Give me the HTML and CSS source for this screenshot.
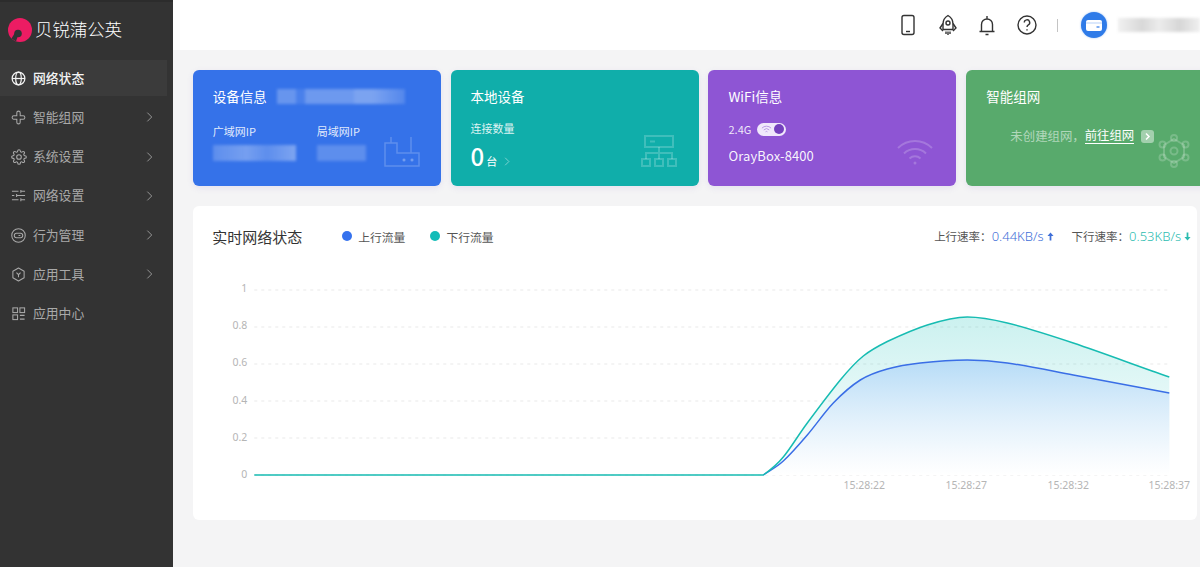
FILE: index.html
```html
<!DOCTYPE html>
<html lang="zh">
<head>
<meta charset="utf-8">
<title>贝锐蒲公英</title>
<link rel="stylesheet" href="styles.css">
</head>
<body>
<div class="app">
  <aside class="sidebar">
    <div class="brand">
      <svg class="brand-mark" viewBox="0 0 24 24"><circle cx="12" cy="12" r="12" fill="#ec1c63"/><circle cx="10" cy="15.500" r="3.800" fill="#2f3335"/><path d="M6.500 15.500L3.500 20.500 8 23.500 9.500 19Z" fill="#2f3335"/></svg>
      <span class="brand-name">贝锐蒲公英</span>
    </div>
    <nav class="nav">
      <a class="nav-item active">
        <svg class="nav-icon" viewBox="0 0 16 16"><circle cx="8" cy="8" r="6.800"/><ellipse cx="8" cy="8" rx="3" ry="6.800"/><path d="M1.200 8h13.600"/></svg>
        <span class="nav-label">网络状态</span>
      </a>
      <a class="nav-item">
        <svg class="nav-icon" viewBox="0 0 16 16"><path d="M6.200 6.200V3a1.800 1.800 0 0 1 3.600 0v3.200H13a1.800 1.800 0 0 1 0 3.600H9.800V13a1.800 1.800 0 0 1-3.600 0V9.800H3a1.800 1.800 0 0 1 0-3.600z"/></svg>
        <span class="nav-label">智能组网</span>
        <svg class="nav-arrow" viewBox="0 0 8 12"><path d="M1.500 1l5 5-5 5"/></svg>
      </a>
      <a class="nav-item">
        <svg class="nav-icon nav-icon-gear" viewBox="0 0 24 24"><circle cx="12" cy="12" r="3.500"/><path d="M19.400 15a1.650 1.650 0 0 0 .33 1.820l.06.06a2 2 0 0 1 0 2.830 2 2 0 0 1-2.830 0l-.06-.06a1.650 1.650 0 0 0-1.820-.33 1.650 1.650 0 0 0-1 1.510V21a2 2 0 0 1-2 2 2 2 0 0 1-2-2v-.09A1.650 1.650 0 0 0 9 19.400a1.650 1.650 0 0 0-1.820.33l-.06.06a2 2 0 0 1-2.830 0 2 2 0 0 1 0-2.830l.06-.06a1.650 1.650 0 0 0 .33-1.820 1.650 1.650 0 0 0-1.510-1H3a2 2 0 0 1-2-2 2 2 0 0 1 2-2h.09A1.650 1.650 0 0 0 4.600 9a1.650 1.650 0 0 0-.33-1.820l-.06-.06a2 2 0 0 1 0-2.830 2 2 0 0 1 2.830 0l.06.06a1.650 1.650 0 0 0 1.820.33H9a1.650 1.650 0 0 0 1-1.510V3a2 2 0 0 1 2-2 2 2 0 0 1 2 2v.09a1.650 1.650 0 0 0 1 1.510 1.650 1.650 0 0 0 1.820-.33l.06-.06a2 2 0 0 1 2.830 0 2 2 0 0 1 0 2.830l-.06.06a1.650 1.650 0 0 0-.33 1.820V9a1.650 1.650 0 0 0 1.510 1H21a2 2 0 0 1 2 2 2 2 0 0 1-2 2h-.09a1.650 1.650 0 0 0-1.510 1z"/></svg>
        <span class="nav-label">系统设置</span>
        <svg class="nav-arrow" viewBox="0 0 8 12"><path d="M1.500 1l5 5-5 5"/></svg>
      </a>
      <a class="nav-item">
        <svg class="nav-icon" viewBox="0 0 16 16"><path d="M1 3.500h7M10.500 3.500H15M10.500 2v3M1 8h2.500M6 8h9M6 6.500v3M1 12.500h7M10.500 12.500H15M10.500 11v3"/></svg>
        <span class="nav-label">网络设置</span>
        <svg class="nav-arrow" viewBox="0 0 8 12"><path d="M1.500 1l5 5-5 5"/></svg>
      </a>
      <a class="nav-item">
        <svg class="nav-icon" viewBox="0 0 16 16"><circle cx="8" cy="8" r="7.200"/><rect x="3.500" y="5.700" width="9" height="4.600" rx="2.300"/><path d="M8 8h2"/></svg>
        <span class="nav-label">行为管理</span>
        <svg class="nav-arrow" viewBox="0 0 8 12"><path d="M1.500 1l5 5-5 5"/></svg>
      </a>
      <a class="nav-item">
        <svg class="nav-icon" viewBox="0 0 16 16"><path d="M8 1l6 3.500v7L8 15l-6-3.500v-7z" stroke-linejoin="round"/><path d="M5.800 6L8 8.200 10.200 6M8 8.200V11"/></svg>
        <span class="nav-label">应用工具</span>
        <svg class="nav-arrow" viewBox="0 0 8 12"><path d="M1.500 1l5 5-5 5"/></svg>
      </a>
      <a class="nav-item">
        <svg class="nav-icon" viewBox="0 0 16 16"><rect x="2" y="2" width="5" height="5"/><rect x="2" y="9.500" width="5" height="5"/><rect x="9.500" y="2" width="5" height="5"/><path d="M9.500 10h5M9.500 14h5"/></svg>
        <span class="nav-label">应用中心</span>
      </a>
    </nav>
  </aside>

  <div class="main">
    <header class="topbar">
      <svg class="top-icon" viewBox="0 0 24 24"><rect x="6" y="2.500" width="12" height="19" rx="2"/><path d="M10 18.500h4"/></svg>
      <svg class="top-icon" viewBox="0 0 24 24"><path d="M12 2.500c3.500 2 5 5 5 8.500v5.500H7V11c0-3.500 1.500-6.500 5-8.500z"/><circle cx="12" cy="10" r="2"/><path d="M7 10.500L4 15l3 3M17 10.500l3 4.500-3 3M10 18.500V21M12 18.500V22M14 18.500V21"/></svg>
      <svg class="top-icon" viewBox="0 0 24 24"><path d="M4.500 18.500h15M6.500 18.500v-7a5.500 5.500 0 0 1 11 0v7M12 6V3M10.500 21.500h3"/></svg>
      <svg class="top-icon" viewBox="0 0 24 24"><circle cx="12" cy="12" r="9"/><path d="M9.300 9.500a2.700 2.700 0 1 1 4 2.400c-.9.500-1.300 1-1.300 2.100"/><path d="M12 16.200v1.300"/></svg>
      <span class="top-divider"></span>
      <span class="avatar">
        <svg viewBox="0 0 26 26"><rect x="5" y="8" width="16" height="11" rx="2" fill="#fff"/><path d="M5 11h16" stroke="#cfe0fb" stroke-width="1.500"/><path d="M15.500 15h3" stroke="#2f7be8" stroke-width="1.200"/></svg>
      </span>
      <span class="user-blur"></span>
    </header>

    <section class="content">
      <div class="cards">
        <article class="card card-blue">
          <h3 class="card-title">设备信息<span class="blur blur-sn"></span></h3>
          <div class="ip-row">
            <div class="ip-col"><span class="meta">广域网IP</span><span class="blur blur-wan"></span></div>
            <div class="ip-col"><span class="meta">局域网IP</span><span class="blur blur-lan"></span></div>
          </div>
          <svg class="card-art art-router" viewBox="0 0 36 30"><path d="M1 6h12v10h22v13H1zM7 0v6M27 0v16"/><circle cx="20" cy="23" r="1" fill="currentColor"/><circle cx="28" cy="23" r="1" fill="currentColor"/></svg>
        </article>

        <article class="card card-teal">
          <h3 class="card-title">本地设备</h3>
          <span class="meta meta-count">连接数量</span>
          <div class="count"><strong class="count-num">0</strong><span class="count-unit">台</span>
            <svg class="count-arrow" viewBox="0 0 8 12"><path d="M1.500 1l5 5-5 5"/></svg></div>
          <svg class="card-art art-net" viewBox="0 0 36 32"><rect x="4" y="1" width="28" height="11"/><path d="M9 6.500h5M18 12v12M5 24v-6h26v6"/><rect x="1" y="24" width="8" height="7"/><rect x="14" y="24" width="8" height="7"/><rect x="27" y="24" width="8" height="7"/></svg>
        </article>

        <article class="card card-purple">
          <h3 class="card-title">WiFi信息</h3>
          <div class="band"><span class="meta">2.4G</span>
            <span class="toggle"><svg class="toggle-wifi" viewBox="0 0 12 9"><path d="M1 3a7 7 0 0 1 10 0M3 5a4.200 4.200 0 0 1 6 0M5 7a1.500 1.500 0 0 1 2 0"/></svg><i class="toggle-knob"></i></span>
          </div>
          <div class="ssid">OrayBox-8400</div>
          <svg class="card-art art-wifi" viewBox="0 0 36 26"><path d="M1 9a24 24 0 0 1 34 0M7 14.500a16 16 0 0 1 22 0M12.500 19.500a8 8 0 0 1 11 0"/><circle cx="18" cy="24" r="1.500" fill="currentColor" stroke="none"/></svg>
        </article>

        <article class="card card-green">
          <h3 class="card-title">智能组网</h3>
          <div class="mesh-note"><span class="mesh-muted">未创建组网，</span><a class="mesh-link">前往组网</a><span class="mesh-go"><svg viewBox="0 0 8 12"><path d="M2 2l4 4-4 4"/></svg></span></div>
          <svg class="card-art art-mesh" viewBox="0 0 32 34"><path d="M16 5l10 6v12l-10 6-10-6V11z"/><circle cx="16" cy="17" r="3.500"/><circle cx="16" cy="4" r="3"/><circle cx="16" cy="30" r="3"/><circle cx="4.500" cy="10.500" r="3"/><circle cx="27.500" cy="10.500" r="3"/><circle cx="4.500" cy="23.500" r="3"/><circle cx="27.500" cy="23.500" r="3"/></svg>
        </article>
      </div>

      <article class="panel">
        <div class="panel-head">
          <h2 class="panel-title">实时网络状态</h2>
          <span class="legend"><i class="dot dot-up"></i>上行流量</span>
          <span class="legend"><i class="dot dot-down"></i>下行流量</span>
          <div class="rates">
            <span class="rate">上行速率：<b class="rate-val rate-up">0.44KB/s<svg class="rate-arrow" viewBox="0 0 8 10"><path d="M4 0.500L7.500 4.500H5V9.500H3V4.500H0.500Z"/></svg></b></span>
            <span class="rate">下行速率：<b class="rate-val rate-down">0.53KB/s<svg class="rate-arrow" viewBox="0 0 8 10"><path d="M4 9.500L7.500 5.500H5V0.500H3V5.500H0.500Z"/></svg></b></span>
          </div>
        </div>
        <svg class="chart" viewBox="192.700 268 1004.300 252">
          <defs>
            <linearGradient id="fillDown" x1="0" y1="0" x2="0" y2="1"><stop offset="0" stop-color="#14c0b8" stop-opacity=".22"/><stop offset=".55" stop-color="#14c0b8" stop-opacity=".1"/><stop offset="1" stop-color="#14c0b8" stop-opacity="0"/></linearGradient>
            <linearGradient id="fillUp" x1="0" y1="0" x2="0" y2="1"><stop offset="0" stop-color="#5cb0ec" stop-opacity=".45"/><stop offset="1" stop-color="#8fc6f0" stop-opacity="0"/></linearGradient>
          </defs>
          <g class="grid">
            <path d="M254 290H1169"/><path d="M254 327H1169"/><path d="M254 364H1169"/><path d="M254 401H1169"/><path d="M254 438H1169"/><path d="M254 475H1169"/>
          </g>
          <g class="y-labels">
            <text x="247" y="292">1</text><text x="247" y="329">0.8</text><text x="247" y="366">0.6</text><text x="247" y="404">0.4</text><text x="247" y="441">0.2</text><text x="247" y="478">0</text>
          </g>
          <g class="x-labels">
            <text x="864" y="489">15:28:22</text><text x="966" y="489">15:28:27</text><text x="1068" y="489">15:28:32</text><text x="1169" y="489">15:28:37</text>
          </g>
          <path fill="url(#fillDown)" d="M763 475C770 470 776 465.700 783 457C790.300 448.300 797.500 435.800 807 423C816.500 410.200 830.700 391.300 840 380C849.300 368.700 855.500 362 863 356C870.500 350 877 346.500 887 341.500C897.700 336.500 913.700 329.200 927 325C940.300 320.800 953.700 317 967 317C980.300 317 994 319.800 1007 323C1029 328.400 1051 335.700 1073 343C1105 353.700 1137 366 1169 377V475Z"/>
          <path fill="#fff" d="M763 475C770 470 775.700 467.700 783 461C790.300 454.300 798.700 444.700 807 435C815.300 425.300 824.200 412.200 833 403C841.800 393.800 851 385.700 860 380C869 374.300 877 371.800 887 369C897 366.200 906.700 364.500 920 363C933.300 361.500 952 360 967 360C982 360 994 361.100 1007 363C1029 366.100 1051 370.900 1073 375C1105 380.900 1137 387 1169 393V475Z"/>
          <path fill="url(#fillUp)" d="M763 475C770 470 775.700 467.700 783 461C790.300 454.300 798.700 444.700 807 435C815.300 425.300 824.200 412.200 833 403C841.800 393.800 851 385.700 860 380C869 374.300 877 371.800 887 369C897 366.200 906.700 364.500 920 363C933.300 361.500 952 360 967 360C982 360 994 361.100 1007 363C1029 366.100 1051 370.900 1073 375C1105 380.900 1137 387 1169 393V475Z"/>
          <path class="line-up" d="M763 475C770 470 775.700 467.700 783 461C790.300 454.300 798.700 444.700 807 435C815.300 425.300 824.200 412.200 833 403C841.800 393.800 851 385.700 860 380C869 374.300 877 371.800 887 369C897 366.200 906.700 364.500 920 363C933.300 361.500 952 360 967 360C982 360 994 361.100 1007 363C1029 366.100 1051 370.900 1073 375C1105 380.900 1137 387 1169 393"/>
          <path class="line-down" d="M254 475H763C770 470 776 465.700 783 457C790.300 448.300 797.500 435.800 807 423C816.500 410.200 830.700 391.300 840 380C849.300 368.700 855.500 362 863 356C870.500 350 877 346.500 887 341.500C897.700 336.500 913.700 329.200 927 325C940.300 320.800 953.700 317 967 317C980.300 317 994 319.800 1007 323C1029 328.400 1051 335.700 1073 343C1105 353.700 1137 366 1169 377"/>
        </svg>
      </article>
    </section>
  </div>
</div>
</body>
</html>
```

FILE: styles.css
```css
* { box-sizing: border-box; }
html, body { margin: 0; height: 100%; overflow: hidden; }
body { font-family: "Noto Sans CJK SC", "Noto Sans", sans-serif; background: #f4f4f5; color: #333; }
h2, h3 { margin: 0; font-weight: 400; }

.app { display: flex; height: 567px; width: 1200px; overflow: hidden; }

.sidebar { flex: 0 0 172.700px; background: #333; border-top: 2px solid #2c2c2c; color: #aaa; }
.brand { display: flex; align-items: center; height: 58px; padding: 0 0 0 8px; }
.brand-mark { width: 24px; height: 24px; margin-top: -3px; }
.brand-name { margin-left: 3px; margin-top: -5px; font-size: 17.500px; font-weight: 300; color: #fff; letter-spacing: -.1px; }

.nav { display: flex; flex-direction: column; gap: 3.250px; }
.nav-item { display: flex; align-items: center; height: 36px; width: 167px; padding: 0 14px 0 11px; font-size: 12.800px; color: #a9a9a9; }
.nav-item.active { background: #3b3b3b; color: #f4f4f4; }
.nav-icon { width: 15px; height: 15px; fill: none; stroke: currentColor; stroke-width: 1.100; flex: none; }
.nav-icon-gear { width: 16px; height: 16px; margin-left: -.5px; margin-right: -.5px; stroke-width: 1.600; }
.active .nav-icon { stroke-width: 1.300; }
.nav-label { margin-left: 7px; flex: 1; padding-bottom: 2px; }
.active .nav-label { font-weight: 500; }
.nav-arrow { width: 7px; height: 12px; fill: none; stroke: #999; stroke-width: 1.100; }

.main { flex: 1; min-width: 0; display: flex; flex-direction: column; }
.topbar { flex: 0 0 50px; display: flex; align-items: center; justify-content: flex-end; gap: 15.500px; background: #fff; }
.top-icon { width: 24px; height: 24px; fill: none; stroke: #333; stroke-width: 1.400; flex: none; }
.top-divider { width: 1px; height: 13px; background: #c4c4c4; margin: 0 8px 0 3px; }
.avatar { width: 26px; height: 26px; border-radius: 50%; background: #2f7be8; margin-left: -1px; box-shadow: 0 0 2px rgba(47,123,232,.5); display: block; flex: none; }
.avatar svg { display: block; }
.user-blur { width: 82px; height: 14px; margin-left: -4px; background: linear-gradient(90deg, #f0f0f0, #d8d8d8 30%, #ececec 50%, #d6d6d6 75%, #f0f0f0); filter: blur(1.500px); flex: none; }

.content { flex: 1; padding: 20px 3px 0 20px; min-height: 0; }
.cards { display: flex; gap: 9.900px; width: 1100px; }
.card { position: relative; flex: 0 0 248px; height: 116px; padding: 17px 20px 0; border-radius: 6px; color: #fff; box-shadow: 0 2px 6px rgba(120,100,200,.12); }
.card-blue { background: #3572e9; }
.card-teal { background: #10aeaa; }
.card-purple { background: #8e55d4; }
.card-green { background: #58aa6c; }
.card-title { font-size: 13.500px; line-height: 18px; display: flex; align-items: center; }
.meta { font-size: 11px; line-height: 16px; color: rgba(255,255,255,.88); }
.blur { display: block; filter: blur(1.500px); background: rgba(255,255,255,.2); }
.blur-sn { width: 128px; height: 15px; margin-left: 10px; background: linear-gradient(90deg, rgba(255,255,255,.25) 0 15%, rgba(255,255,255,.1) 15% 22%, rgba(255,255,255,.28) 22% 60%, rgba(255,255,255,.35) 60% 75%, rgba(255,255,255,.15)); }
.ip-row { display: flex; margin-top: 18px; }
.ip-col { display: flex; flex-direction: column; }
.ip-col:first-child { width: 104px; }
.ip-col .blur { margin-top: 6px; height: 16px; }
.blur-wan { width: 83px; background: linear-gradient(90deg, rgba(255,255,255,.2), rgba(255,255,255,.32) 40%, rgba(255,255,255,.2) 65%, rgba(255,255,255,.36)); }
.blur-lan { width: 49px; }
.card-art { position: absolute; fill: none; stroke: currentColor; stroke-width: 2; color: rgba(255,255,255,.2); }
.art-router { left: 191px; top: 67px; width: 36px; height: 30px; stroke-width: 1.500; }
.art-net { left: 190px; top: 65px; width: 36px; height: 32px; }
.art-wifi { left: 189px; top: 69px; width: 36px; height: 26px; }
.art-mesh { left: 192px; top: 64px; width: 32px; height: 34px; }

.meta-count { display: block; margin-top: 15px; font-size: 11px; }
.count { display: flex; align-items: baseline; margin-top: 4px; }
.count-num { font-size: 24px; font-weight: 500; line-height: 31px; }
.count-unit { font-size: 11px; margin-left: 2px; }
.count-arrow { width: 6px; height: 9px; margin-left: 7px; fill: none; stroke: rgba(255,255,255,.55); stroke-width: 1.100; }

.band { display: flex; align-items: center; margin-top: 16px; }
.toggle { position: relative; display: block; width: 29px; height: 13px; margin-left: 6px; border-radius: 7px; background: #f0e8fb; }
.toggle-wifi { position: absolute; left: 4px; top: 2px; width: 11px; height: 9px; fill: none; stroke: #b592e4; stroke-width: 1; }
.toggle-knob { position: absolute; right: 2px; top: 1.500px; width: 10px; height: 10px; border-radius: 50%; background: #7440bd; }
.ssid { margin-top: 10px; font-size: 13px; line-height: 18px; letter-spacing: .1px; color: rgba(255,255,255,.95); }

.mesh-note { display: flex; align-items: center; margin: 22px 0 0 24px; font-size: 12.400px; line-height: 18px; }
.mesh-muted { color: rgba(255,255,255,.55); }
.mesh-link { color: #fff; border-bottom: 1px solid #fff; line-height: 15px; }
.mesh-go { display: block; width: 13px; height: 13px; margin-left: 7px; border-radius: 3px; background: rgba(255,255,255,.45); }
.mesh-go svg { display: block; width: 13px; height: 13px; padding: 2px; fill: none; stroke: #fff; stroke-width: 2; }

.panel { margin-top: 20px; height: 314px; border-radius: 6px; background: #fff; }
.panel-head { display: flex; align-items: center; height: 62px; padding: 0 6px 2px 19.500px; }
.panel-title { font-size: 15px; color: #333; margin-right: 40px; }
.legend { display: flex; align-items: center; font-size: 11.800px; color: #555; margin-right: 25px; }
.dot { width: 10px; height: 10px; border-radius: 50%; margin-right: 6px; }
.dot-up { background: #3572ee; }
.dot-down { background: #13bcb8; }
.rates { margin-left: auto; display: flex; gap: 18px; font-size: 11.500px; color: #555; }
.rate { display: flex; align-items: center; }
.rate-val { display: flex; align-items: center; font: 300 13px "Noto Sans", sans-serif; }
.rate-up { color: #3f6fd8; }
.rate-down { color: #2cbcb0; }
.rate-arrow { width: 7px; height: 9px; margin-left: 3px; fill: currentColor; }

.chart { display: block; width: 1004.300px; height: 252px; }
.grid path { stroke: #e9e9e9; stroke-dasharray: 3 4; fill: none; }
.y-labels text { font: 10.500px "Noto Sans", sans-serif; fill: #b5b5b5; text-anchor: end; }
.x-labels text { font: 10.500px "Noto Sans", sans-serif; fill: #b5b5b5; text-anchor: middle; }
.line-up { fill: none; stroke: #3a6ee6; stroke-width: 1.500; }
.line-down { fill: none; stroke: #17bcb2; stroke-width: 1.500; }
```
